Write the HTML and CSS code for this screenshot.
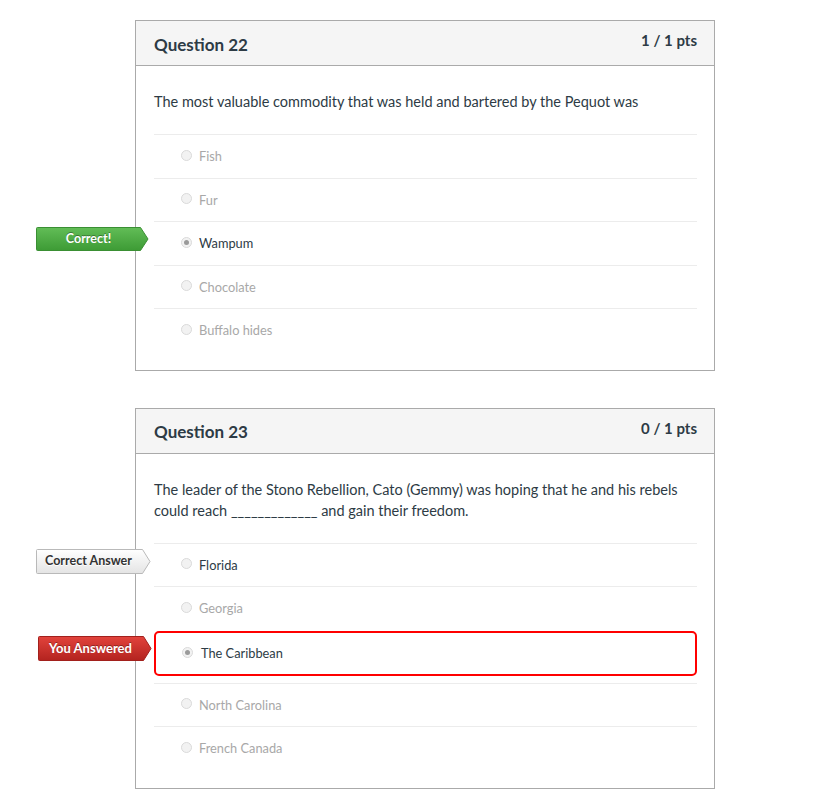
FILE: index.html
```html
<!DOCTYPE html>
<html lang="en">
<head>
  <meta charset="UTF-8" />
  <title>Quiz Results</title>
  <link rel="stylesheet" href="styles.css">
</head>
<body>
  <div class="quiz">

    <!-- Question 22 -->
    <div class="question">
      <div class="question-header">
        <span class="question-name">Question 22</span>
        <span class="question-points">1 / 1 pts</span>
      </div>
      <div class="question-body">
        <p class="question-text">The most valuable commodity that was held and bartered by the Pequot was</p>
        <div class="answers">
          <div class="answer"><span class="radio"></span><span class="answer-text">Fish</span></div>
          <div class="answer"><span class="radio"></span><span class="answer-text">Fur</span></div>
          <div class="answer answer-chosen">
            <div class="answer-label label-correct">
              <svg class="label-shape" width="113" height="24" viewBox="0 0 113 24">
                <defs>
                  <linearGradient id="gGreen" x1="0" y1="0" x2="0" y2="1">
                    <stop offset="0" stop-color="#62bd57"/>
                    <stop offset="1" stop-color="#3d9b35"/>
                  </linearGradient>
                </defs>
                <path d="M1.5 0.5 H104.5 L112 12 L104.5 23.5 H1.5 Q0.5 23.5 0.5 22.5 V1.5 Q0.5 0.5 1.5 0.5 Z" fill="url(#gGreen)" stroke="#3a8f33"/>
              </svg>
              <span class="label-text">Correct!</span>
            </div>
            <span class="radio checked"></span><span class="answer-text">Wampum</span>
          </div>
          <div class="answer"><span class="radio"></span><span class="answer-text">Chocolate</span></div>
          <div class="answer"><span class="radio"></span><span class="answer-text">Buffalo hides</span></div>
        </div>
      </div>
    </div>

    <!-- Question 23 -->
    <div class="question">
      <div class="question-header">
        <span class="question-name">Question 23</span>
        <span class="question-points">0 / 1 pts</span>
      </div>
      <div class="question-body">
        <p class="question-text">The leader of the Stono Rebellion, Cato (Gemmy) was hoping that he and his rebels could reach _____________ and gain their freedom.</p>
        <div class="answers">
          <div class="answer answer-right">
            <div class="answer-label label-answer">
              <svg class="label-shape" width="115" height="25" viewBox="0 0 115 25">
                <defs>
                  <linearGradient id="gGray" x1="0" y1="0" x2="0" y2="1">
                    <stop offset="0" stop-color="#ffffff"/>
                    <stop offset="1" stop-color="#e4e4e4"/>
                  </linearGradient>
                </defs>
                <path d="M1.5 0.5 H106.5 L114 12.5 L106.5 24.5 H1.5 Q0.5 24.5 0.5 23.5 V1.5 Q0.5 0.5 1.5 0.5 Z" fill="url(#gGray)" stroke="#b9b9b9"/>
              </svg>
              <span class="label-text">Correct Answer</span>
            </div>
            <span class="radio"></span><span class="answer-text">Florida</span>
          </div>
          <div class="answer"><span class="radio"></span><span class="answer-text">Georgia</span></div>
          <div class="answer answer-wrong">
            <div class="answer-label label-wrong">
              <svg class="label-shape" width="114" height="25" viewBox="0 0 114 25">
                <defs>
                  <linearGradient id="gRed" x1="0" y1="0" x2="0" y2="1">
                    <stop offset="0" stop-color="#e2433c"/>
                    <stop offset="1" stop-color="#b3231f"/>
                  </linearGradient>
                </defs>
                <path d="M1.5 0.5 H105.5 L113 12.5 L105.5 24.5 H1.5 Q0.5 24.5 0.5 23.5 V1.5 Q0.5 0.5 1.5 0.5 Z" fill="url(#gRed)" stroke="#a2201c"/>
              </svg>
              <span class="label-text">You Answered</span>
            </div>
            <span class="radio checked"></span><span class="answer-text">The Caribbean</span>
          </div>
          <div class="answer"><span class="radio"></span><span class="answer-text">North Carolina</span></div>
          <div class="answer"><span class="radio"></span><span class="answer-text">French Canada</span></div>
        </div>
      </div>
    </div>

  </div>
</body>
</html>
```

FILE: styles.css
```css
* { margin: 0; padding: 0; box-sizing: border-box; }
body {
  font-family: Lato, "Open Sans", sans-serif;
  background: #fff;
  color: #2d3b45;
}

.quiz {
  padding: 20px 0 0 135px;
  display: flex;
  flex-direction: column;
  gap: 37px;
}

.question {
  width: 580px;
  border: 1px solid #aaaaaa;
  background: #fff;
}
.question-header {
  display: flex;
  justify-content: space-between;
  height: 45px;
  padding: 0 17px 0 18px;
  background: #f5f5f5;
  border-bottom: 1px solid #aaaaaa;
}
.question-name {
  align-self: center;
  font-size: 17px;
  font-weight: bold;
  padding-top: 2px;
}
.question-points {
  padding-top: 10px;
  font-size: 15px;
  font-weight: bold;
}

.question-body {
  padding: 25px 17px 18px 18px;
}
.question-text {
  font-size: 14.5px;
  line-height: 21px;
  margin-bottom: 22px;
}

.answer {
  position: relative;
  display: flex;
  align-items: center;
  height: 43.5px;
  padding-left: 27px;
  border-top: 1px solid #ececec;
  font-size: 12.8px;
  color: #a8a8a8;
}
.answer-chosen,
.answer-right {
  color: #2d3b45;
}
.answer-wrong {
  height: 45px;
  margin-top: 1px;
  margin-bottom: 7px;
  padding-left: 26px;
  border: 2px solid #ff0000;
  border-radius: 5px;
  color: #2d3b45;
}
.answer-wrong .answer-text { margin-left: 1px; }

.radio {
  width: 11px;
  height: 11px;
  border-radius: 50%;
  border: 1px solid #dadada;
  background: #f2f2f2;
  margin-right: 7px;
  margin-top: -2px;
  position: relative;
}
.radio.checked::after {
  content: "";
  position: absolute;
  left: 2px;
  top: 2px;
  width: 5px;
  height: 5px;
  border-radius: 50%;
  background: #9a9a9a;
}

/* result tags hanging off the left edge of the card */
.answer-label {
  position: absolute;
  left: -118px;
  top: 5px;
  width: 115px;
  height: 25px;
}
.label-correct { top: 5px; }
.label-wrong { top: 3px; }
.label-shape {
  position: absolute;
  left: 0;
  top: 0;
}
.label-text {
  position: relative;
  display: block;
  width: 105px;
  text-align: center;
  font-size: 12.5px;
  font-weight: bold;
  line-height: 23px;
  color: #fff;
  text-shadow: 0 -1px 0 rgba(0, 0, 0, 0.35);
}
.label-answer .label-text {
  line-height: 24px;
  color: #333;
  text-shadow: 0 1px 0 #fff;
}
.label-wrong .label-text {
  line-height: 24px;
  font-size: 13px;
}
```
